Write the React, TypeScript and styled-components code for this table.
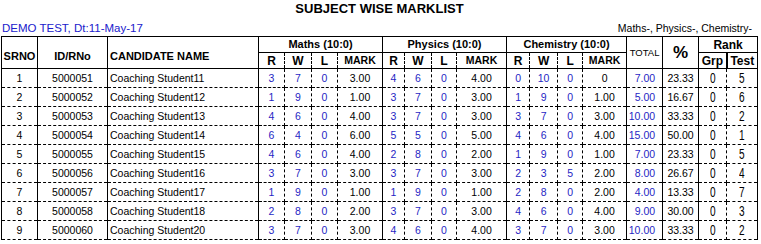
import styled, { createGlobalStyle } from "styled-components";

const GlobalStyle = createGlobalStyle`
    body {
        margin: 0;
        background: #fff;
        font-family: "Liberation Sans", Arial, sans-serif;
        color: #000;
    }
`

const Page = styled.div`
    width: 761px;
    padding-top: 1px;
`

const Title = styled.h1`
    margin: 0;
    font-size: 13px;
    line-height: 15px;
    font-weight: 700;
    text-align: center;
    padding-right: 2px;
`

const InfoRow = styled.div`
    display: flex;
    justify-content: space-between;
    align-items: baseline;
    margin-top: 6px;
    padding: 0 9px 0 2px;
`

const TestName = styled.span`
    font-size: 11.5px;
    color: #2020cc;
`

const SubjectList = styled.span`
    font-size: 10.5px;
`

const Table = styled.table`
    border-collapse: collapse;
    table-layout: fixed;
    width: 756px;
    margin: 2px 0 0 1px;
`

const HeadCell = styled.th<{ $size?: number; $weight?: number; $align?: string; $sub?: "first" | "mid"; $bar?: boolean; $open?: boolean; $low?: number }>`
    padding: 0;
    padding-top: ${p => p.$low ?? 0}px;
    height: 15px;
    font-size: ${p => p.$size ?? 11}px;
    font-weight: ${p => p.$weight ?? 700};
    text-align: ${p => p.$align ?? "center"};
    padding-left: ${p => (p.$align === "left" ? "2px" : "0")};
    vertical-align: middle;
    white-space: nowrap;
    overflow: visible;
    line-height: 1;
    border: 1px solid #000;
    ${p => p.$sub === "mid" && "border-left: 1px dashed #000;"}
    ${p => p.$sub && "border-right: 1px dashed #000;"}
    ${p => p.$bar && "border-right: 2px solid #000;"}
    ${p => p.$open && "border-bottom: none;"}
`

const Cell = styled.td<{ $align?: string; $blue?: boolean; $start?: boolean; $pad?: number }>`
    padding: 0;
    padding-left: ${p => (p.$align === "left" ? p.$pad ?? 2 : 0)}px;
    padding-right: ${p => (p.$align === "right" ? p.$pad ?? 7 : 0)}px;
    height: 18px;
    font-size: 10.5px;
    text-align: ${p => p.$align ?? "center"};
    color: ${p => (p.$blue ? "#1f1fc4" : "#000")};
    white-space: nowrap;
    border: 1px dashed #000;
    ${p => p.$start && "border-left: 1px solid #000;"}
`

const LastCell = styled(Cell)`
    border-right: 1px solid #000;
`

const Narrow = styled.span`
    display: inline-block;
    font-size: 14px;
    line-height: 1;
    transform: scaleX(0.72);
`

const widths = [36, 70, 151, 26, 27, 26, 45, 22, 27, 25, 50, 23, 28, 25, 44, 36, 36, 28, 31]

type Row = {
    sr: number
    id: string
    name: string
    subjects: [string, string, string, string][]
    total: string
    pct: string
    grp: string
    test: string
}

const rows: Row[] = [
    { sr: 1, id: "5000051", name: "Coaching Student11", subjects: [["3", "7", "0", "3.00"], ["4", "6", "0", "4.00"], ["0", "10", "0", "0"]], total: "7.00", pct: "23.33", grp: "0", test: "5" },
    { sr: 2, id: "5000052", name: "Coaching Student12", subjects: [["1", "9", "0", "1.00"], ["3", "7", "0", "3.00"], ["1", "9", "0", "1.00"]], total: "5.00", pct: "16.67", grp: "0", test: "6" },
    { sr: 3, id: "5000053", name: "Coaching Student13", subjects: [["4", "6", "0", "4.00"], ["3", "7", "0", "3.00"], ["3", "7", "0", "3.00"]], total: "10.00", pct: "33.33", grp: "0", test: "2" },
    { sr: 4, id: "5000054", name: "Coaching Student14", subjects: [["6", "4", "0", "6.00"], ["5", "5", "0", "5.00"], ["4", "6", "0", "4.00"]], total: "15.00", pct: "50.00", grp: "0", test: "1" },
    { sr: 5, id: "5000055", name: "Coaching Student15", subjects: [["4", "6", "0", "4.00"], ["2", "8", "0", "2.00"], ["1", "9", "0", "1.00"]], total: "7.00", pct: "23.33", grp: "0", test: "5" },
    { sr: 6, id: "5000056", name: "Coaching Student16", subjects: [["3", "7", "0", "3.00"], ["3", "7", "0", "3.00"], ["2", "3", "5", "2.00"]], total: "8.00", pct: "26.67", grp: "0", test: "4" },
    { sr: 7, id: "5000057", name: "Coaching Student17", subjects: [["1", "9", "0", "1.00"], ["1", "9", "0", "1.00"], ["2", "8", "0", "2.00"]], total: "4.00", pct: "13.33", grp: "0", test: "7" },
    { sr: 8, id: "5000058", name: "Coaching Student18", subjects: [["2", "8", "0", "2.00"], ["3", "7", "0", "3.00"], ["4", "6", "0", "4.00"]], total: "9.00", pct: "30.00", grp: "0", test: "3" },
    { sr: 9, id: "5000060", name: "Coaching Student20", subjects: [["3", "7", "0", "3.00"], ["4", "6", "0", "4.00"], ["3", "7", "0", "3.00"]], total: "10.00", pct: "33.33", grp: "0", test: "2" },
]

const subjectNames = ["Maths (10:0)", "Physics (10:0)", "Chemistry (10:0)"]

export default function App() {
    return (
        <Page>
            <GlobalStyle />
            <Title>SUBJECT WISE MARKLIST</Title>
            <InfoRow>
                <TestName>DEMO TEST, Dt:11-May-17</TestName>
                <SubjectList>Maths-, Physics-, Chemistry-</SubjectList>
            </InfoRow>
            <Table>
                <colgroup>
                    {widths.map((w, i) => <col key={i} style={{ width: w }} />)}
                </colgroup>
                <thead>
                    <tr>
                        <HeadCell rowSpan={2} $low={7}>SRNO</HeadCell>
                        <HeadCell rowSpan={2} $low={7}>ID/RNo</HeadCell>
                        <HeadCell rowSpan={2} $low={7} $align="left">CANDIDATE NAME</HeadCell>
                        {subjectNames.map(s => <HeadCell key={s} colSpan={4}>{s}</HeadCell>)}
                        <HeadCell rowSpan={2} $size={9.5} $weight={400}>TOTAL</HeadCell>
                        <HeadCell rowSpan={2} $size={17}>%</HeadCell>
                        <HeadCell colSpan={2} $size={12} $open>Rank</HeadCell>
                    </tr>
                    <tr>
                        {subjectNames.map(s => (
                            ["R", "W", "L", "MARK"].map((h, i) => (
                                <HeadCell key={s + h} $size={h === "MARK" ? 10.5 : 12} $sub={i === 0 ? "first" : "mid"}>{h}</HeadCell>
                            ))
                        ))}
                        <HeadCell $size={12} $bar>Grp</HeadCell>
                        <HeadCell $size={12}>Test</HeadCell>
                    </tr>
                </thead>
                <tbody>
                    {rows.map(r => (
                        <tr key={r.sr}>
                            <Cell $start>{r.sr}</Cell>
                            <Cell $start>{r.id}</Cell>
                            <Cell $start $align="left">{r.name}</Cell>
                            {r.subjects.map((s, si) => (
                                [
                                    <Cell key={si + "r"} $start $blue>{s[0]}</Cell>,
                                    <Cell key={si + "w"} $blue>{s[1]}</Cell>,
                                    <Cell key={si + "l"} $blue>{s[2]}</Cell>,
                                    <Cell key={si + "m"}>{s[3]}</Cell>,
                                ]
                            ))}
                            <Cell $start $blue $align="right">{r.total}</Cell>
                            <Cell $start>{r.pct}</Cell>
                            <Cell $start><Narrow>{r.grp}</Narrow></Cell>
                            <LastCell><Narrow>{r.test}</Narrow></LastCell>
                        </tr>
                    ))}
                </tbody>
            </Table>
        </Page>
    )
}
